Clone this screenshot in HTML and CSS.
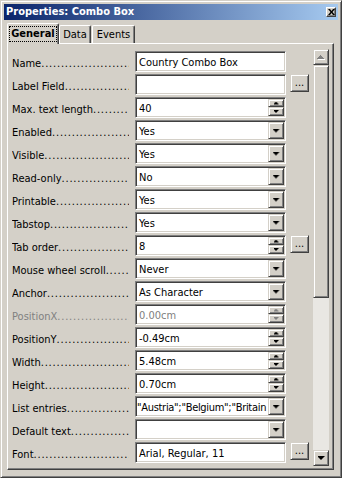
FILE: index.html
```html
<!DOCTYPE html>
<html lang="en">
<head>
    <meta charset="UTF-8">
    <title>Properties: Combo Box</title>
    <link rel="stylesheet" href="styles.css">
</head>
<body>
    <div class="window">
        <div class="titlebar">
            <span class="title">Properties: Combo Box</span>
            <span class="close">
                <svg width="7" height="6" viewBox="0 0 7 6"><path d="M0 0h2l1.5 2 1.5-2h2l-2.5 3 2.5 3h-2l-1.5-2-1.5 2h-2l2.5-3z"/></svg>
            </span>
        </div>

        <div class="tabs">
            <div class="tab active"><span class="focus">General</span></div>
            <div class="tab data">Data</div>
            <div class="tab events">Events</div>
        </div>

        <div class="panel">
            <div class="rows">
                <div class="row">
                    <div class="label">Name</div>
                    <div class="field"><span class="value">Country Combo Box</span></div>
                </div>
                <div class="row">
                    <div class="label">Label Field</div>
                    <div class="field"><span class="value"></span></div>
                    <div class="more">...</div>
                </div>
                <div class="row">
                    <div class="label">Max. text length</div>
                    <div class="field"><span class="value">40</span><span class="spin"><i class="up"></i><i class="down"></i></span></div>
                </div>
                <div class="row">
                    <div class="label">Enabled</div>
                    <div class="field"><span class="value">Yes</span><span class="drop"></span></div>
                </div>
                <div class="row">
                    <div class="label">Visible</div>
                    <div class="field"><span class="value">Yes</span><span class="drop"></span></div>
                </div>
                <div class="row">
                    <div class="label">Read-only</div>
                    <div class="field"><span class="value">No</span><span class="drop"></span></div>
                </div>
                <div class="row">
                    <div class="label">Printable</div>
                    <div class="field"><span class="value">Yes</span><span class="drop"></span></div>
                </div>
                <div class="row">
                    <div class="label">Tabstop</div>
                    <div class="field"><span class="value">Yes</span><span class="drop"></span></div>
                </div>
                <div class="row">
                    <div class="label">Tab order</div>
                    <div class="field"><span class="value">8</span><span class="spin"><i class="up"></i><i class="down"></i></span></div>
                    <div class="more">...</div>
                </div>
                <div class="row">
                    <div class="label">Mouse wheel scroll</div>
                    <div class="field"><span class="value">Never</span><span class="drop"></span></div>
                </div>
                <div class="row">
                    <div class="label">Anchor</div>
                    <div class="field"><span class="value">As Character</span><span class="drop"></span></div>
                </div>
                <div class="row disabled">
                    <div class="label">PositionX</div>
                    <div class="field"><span class="value">0.00cm</span><span class="spin"><i class="up"></i><i class="down"></i></span></div>
                </div>
                <div class="row">
                    <div class="label">PositionY</div>
                    <div class="field"><span class="value">-0.49cm</span><span class="spin"><i class="up"></i><i class="down"></i></span></div>
                </div>
                <div class="row">
                    <div class="label">Width</div>
                    <div class="field"><span class="value">5.48cm</span><span class="spin"><i class="up"></i><i class="down"></i></span></div>
                </div>
                <div class="row">
                    <div class="label">Height</div>
                    <div class="field"><span class="value">0.70cm</span><span class="spin"><i class="up"></i><i class="down"></i></span></div>
                </div>
                <div class="row">
                    <div class="label">List entries</div>
                    <div class="field"><span class="value scrolled">"Austria";"Belgium";"Britain</span><span class="drop"></span></div>
                </div>
                <div class="row">
                    <div class="label">Default text</div>
                    <div class="field"><span class="value"></span><span class="drop"></span></div>
                </div>
                <div class="row">
                    <div class="label">Font</div>
                    <div class="field"><span class="value">Arial, Regular, 11</span></div>
                    <div class="more">...</div>
                </div>
            </div>

            <div class="scrollbar">
                <div class="sb-btn">
                    <svg width="8" height="5" viewBox="0 0 8 5"><path fill="#fff" d="M4 1h1v1h1v1h1v1h1v1h-7v-1h1v-1h1v-1h1z"/><path fill="#808080" d="M3 0h1v1h1v1h1v1h1v1h-7v-1h1v-1h1v-1h1z"/></svg>
                </div>
                <div class="sb-thumb"></div>
                <div class="sb-track"></div>
                <div class="sb-btn sb-down"></div>
            </div>
        </div>
    </div>
</body>
</html>
```

FILE: styles.css
```css
body {
    margin: 0;
    background: #d4d0c8;
    font-family: "DejaVu Sans Condensed", "Liberation Sans", Arial, sans-serif;
    font-size: 11px;
    color: #000;
}

/* window frame */
.window {
    box-sizing: border-box;
    width: 342px;
    height: 478px;
    display: flex;
    flex-direction: column;
    padding: 3px;
    background: #d4d0c8;
    border: 1px solid;
    border-color: #d4d0c8 #404040 #404040 #d4d0c8;
    box-shadow: inset 1px 1px #fff, inset -1px -1px #808080;
}
.titlebar {
    height: 16px;
    display: flex;
    align-items: center;
    justify-content: space-between;
    padding: 0 2px;
    background: linear-gradient(to right, #0a246a, #a6caf0);
    color: #fff;
}
.title {
    font-weight: bold;
    font-size: 11px;
    line-height: 16px;
}
.close {
    box-sizing: border-box;
    width: 10px;
    height: 10px;
    display: flex;
    align-items: center;
    justify-content: center;
    background: #d4d0c8;
    border: 1px solid;
    border-color: #fff #404040 #404040 #fff;
    box-shadow: inset -1px -1px #808080;
}

/* tabs */
.tabs {
    display: flex;
    align-items: flex-end;
    height: 20px;
    margin-top: 3px;
    padding-left: 3px;
}
.tab {
    box-sizing: border-box;
    height: 18px;
    border: 1px solid;
    border-bottom: none;
    border-color: #fff #404040 #fff #fff;
    border-radius: 2px 2px 0 0;
    box-shadow: inset -1px 0 #808080;
    text-align: center;
    line-height: 17px;
}
.tab.data {
    width: 32px;
}
.tab.events {
    width: 43px;
    margin-left: 1px;
}
.tab.active {
    width: 52px;
    height: 21px;
    margin-bottom: -1px;
    position: relative;
    z-index: 1;
    background: #d4d0c8;
    font-weight: bold;
}
.focus {
    display: block;
    margin: 2px 1px 0;
    border: 1px dotted #000;
    line-height: 14px;
}

/* property panel */
.panel {
    flex: 1;
    display: flex;
    margin: 0 4px 4px 3px;
    padding: 0 4px;
    overflow: hidden;
    border: 1px solid;
    border-color: #fff #404040 #404040 #fff;
    box-shadow: inset -1px -1px #808080;
}
.rows {
    flex: 1;
    display: flex;
    flex-direction: column;
    gap: 2px;
    padding-top: 7px;
}
.row {
    display: grid;
    grid-template-columns: 119px 151px 19px;
    column-gap: 4px;
    align-items: start;
    height: 21px;
}
.label {
    max-width: 117px;
    padding-top: 5px;
    line-height: 16px;
    white-space: nowrap;
    overflow: hidden;
}
.label::after {
    content: "..................................................";
    letter-spacing: 0.8px;
}
.row.disabled .label,
.row.disabled .value {
    color: #808080;
}

.field {
    box-sizing: border-box;
    height: 21px;
    display: flex;
    padding: 1px;
    background: #fff;
    border: 1px solid;
    border-color: #808080 #fff #fff #808080;
    box-shadow: inset 1px 1px #404040, inset -1px -1px #d4d0c8;
}
.value {
    flex: 1;
    padding: 3px 0 0 2px;
    line-height: 14px;
    white-space: nowrap;
    overflow: hidden;
}
.value.scrolled {
    padding-left: 0;
    letter-spacing: -0.3px;
}

/* raised buttons */
.drop, .spin i, .more, .sb-btn, .sb-thumb {
    box-sizing: border-box;
    background: #d4d0c8;
    border: 1px solid;
    border-color: #d4d0c8 #404040 #404040 #d4d0c8;
    box-shadow: inset 1px 1px #fff, inset -1px -1px #808080;
}
.drop, .sb-btn {
    display: flex;
    align-items: center;
    justify-content: center;
}
.drop {
    width: 16px;
}
.drop::after, .sb-down::after {
    content: "";
    width: 7px;
    height: 4px;
    background: #000;
    clip-path: polygon(0 0, 7px 0, 7px 1px, 6px 1px, 6px 2px, 5px 2px, 5px 3px, 4px 3px, 4px 4px, 3px 4px, 3px 3px, 2px 3px, 2px 2px, 1px 2px, 1px 1px, 0 1px);
}
.spin {
    width: 16px;
    display: flex;
    flex-direction: column;
}
.spin i {
    display: flex;
    align-items: center;
    justify-content: center;
    height: 8px;
}
.spin i.down {
    height: 9px;
}
.spin i::after {
    content: "";
    width: 5px;
    height: 3px;
    background: #000;
}
.spin i.up::after {
    clip-path: polygon(2px 0, 3px 0, 3px 1px, 4px 1px, 4px 2px, 5px 2px, 5px 3px, 0 3px, 0 2px, 1px 2px, 1px 1px, 2px 1px);
}
.spin i.down::after {
    clip-path: polygon(0 0, 5px 0, 5px 1px, 4px 1px, 4px 2px, 3px 2px, 3px 3px, 2px 3px, 2px 2px, 1px 2px, 1px 1px, 0 1px);
}
.row.disabled .spin i::after {
    background: #808080;
}
.more {
    height: 18px;
    text-align: center;
    line-height: 16px;
}

/* scrollbar */
.scrollbar {
    width: 16px;
    margin: 5px 0 3px 4px;
    display: flex;
    flex-direction: column;
}
.sb-btn {
    height: 16px;
}
.sb-thumb {
    height: 233px;
}
.sb-track {
    flex: 1;
    background: #e9e7e3;
}
```
